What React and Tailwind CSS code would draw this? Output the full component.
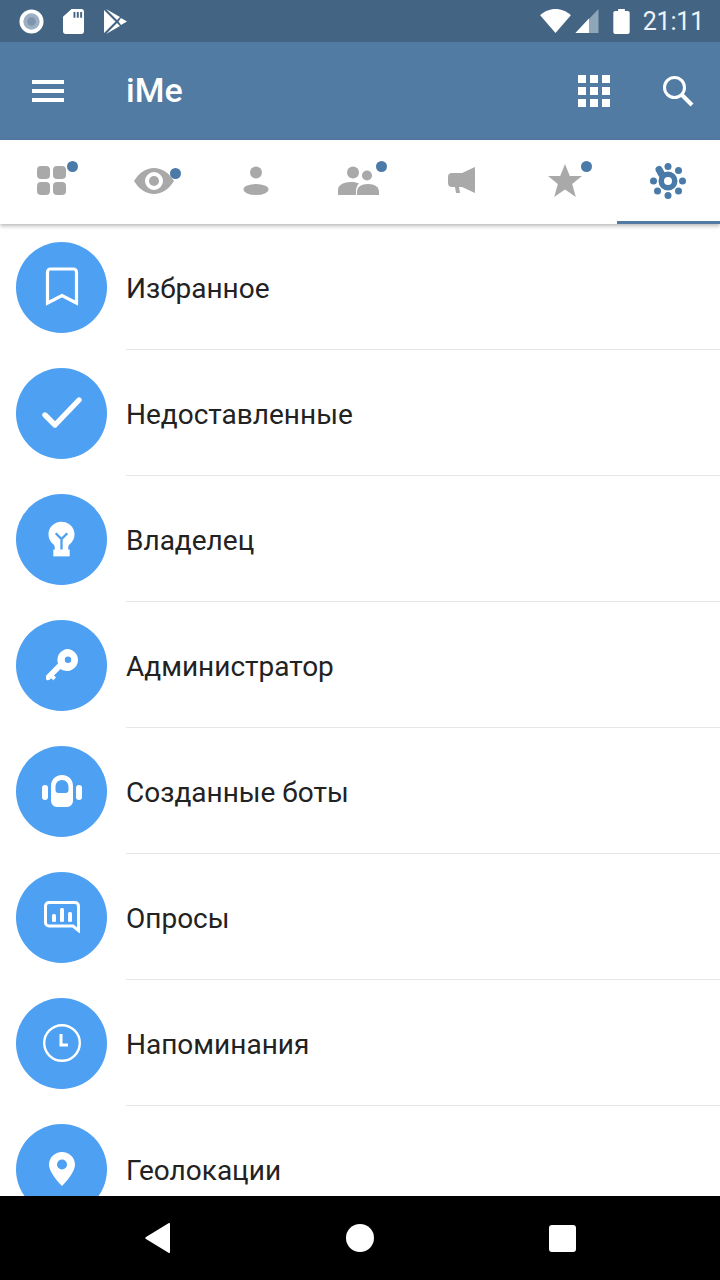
import { Fragment } from 'react'

function BookmarkIcon() {
  return (
    <svg width="34" height="40" viewBox="0 0 34 40" fill="none" stroke="white" strokeWidth="3.2">
      <path d="M2.500 36V5a3 3 0 0 1 3-3h23a3 3 0 0 1 3 3v31L17 28.500z" strokeLinejoin="miter" />
    </svg>
  )
}

function CheckIcon() {
  return (
    <svg width="42" height="34" viewBox="0 0 42 34" fill="none" stroke="white" strokeWidth="5.4" strokeLinecap="round" strokeLinejoin="round">
      <path d="M4 19l10 10L38 4" />
    </svg>
  )
}

function BulbIcon() {
  return (
    <svg width="27" height="36" viewBox="0 0 28 36">
      <path fill="white" d="M14 0C6.300 0 .5 5.800.5 13c0 4.700 2.200 8 5 10.500 1 .9 1.500 2 1.500 3.500v2.500h14V27c0-1.500.5-2.600 1.500-3.500 2.800-2.500 5-5.800 5-10.500C27.500 5.800 21.700 0 14 0z" />
      <rect x="5.500" y="29" width="17" height="7" fill="white" />
      <path d="M8 12l6 6 6-6M14 18v11" fill="none" stroke="#4EA0F3" strokeWidth="2.400" />
    </svg>
  )
}

function KeyIcon() {
  return (
    <svg width="32" height="32" viewBox="0 0 32 32">
      <path fill="white" fillRule="evenodd" d="M21 0a11 11 0 1 1-6.500 19.900L8 26.400l2 2-2.800 2.800-2-2-1.400 1.400a2.700 2.700 0 0 1-3.800-3.800L12 14.500A11 11 0 0 1 21 0zm1 7.500a3.200 3.200 0 1 0 0 6.400 3.200 3.200 0 0 0 0-6.400z" />
    </svg>
  )
}

function BotIcon() {
  return (
    <svg width="40" height="32" viewBox="0 0 40 32">
      <rect x="0" y="10" width="6" height="15" rx="3" fill="white" />
      <rect x="34" y="10" width="6" height="15" rx="3" fill="white" />
      <path fill="white" fillRule="evenodd" d="M20 0c7 0 11 5 11 11v15a6 6 0 0 1-6 6H15a6 6 0 0 1-6-6V11C9 5 13 0 20 0zm0 5c-4 0-6.500 3-6.500 7v3a3 3 0 0 0 3 3h7a3 3 0 0 0 3-3v-3c0-4-2.500-7-6.500-7z" />
    </svg>
  )
}

function PollIcon() {
  return (
    <svg width="36" height="32" viewBox="0 0 36 32" fill="none">
      <path d="M5 1.500h26a3.500 3.500 0 0 1 3.500 3.500v24.500L29 25H5a3.500 3.500 0 0 1-3.500-3.500V5A3.500 3.500 0 0 1 5 1.500z" stroke="white" strokeWidth="3" />
      <rect x="8" y="13" width="4" height="8" rx="1.500" fill="white" />
      <rect x="16" y="7" width="4" height="14" rx="1.500" fill="white" />
      <rect x="24" y="11" width="4" height="10" rx="1.500" fill="white" />
    </svg>
  )
}

function ClockIcon() {
  return (
    <svg width="40" height="40" viewBox="0 0 40 40" fill="none" stroke="white">
      <circle cx="20" cy="20" r="17.800" strokeWidth="2.400" />
      <path d="M19 11v11h7" strokeWidth="3" />
    </svg>
  )
}

function PinIcon() {
  return (
    <svg width="26" height="34" viewBox="0 0 26 34">
      <path fill="white" fillRule="evenodd" d="M13 0c7.200 0 13 5.600 13 12.800C26 20 17 30 13 34 9 30 0 20 0 12.800 0 5.600 5.800 0 13 0zm0 7.500a5 5 0 1 0 0 10 5 5 0 0 0 0-10z" />
    </svg>
  )
}

const ROWS = [
  { label: 'Избранное', icon: <BookmarkIcon /> },
  { label: 'Недоставленные', icon: <CheckIcon /> },
  { label: 'Владелец', icon: <BulbIcon /> },
  { label: 'Администратор', icon: <KeyIcon /> },
  { label: 'Созданные боты', icon: <BotIcon /> },
  { label: 'Опросы', icon: <PollIcon /> },
  { label: 'Напоминания', icon: <ClockIcon /> },
  { label: 'Геолокации', icon: <PinIcon /> },
]

function StatusBar() {
  return (
    <div className="h-[42px] shrink-0 bg-[#436583] flex items-center justify-between pl-[19px] pr-[16px]">
      <div className="flex items-center gap-[19px]">
        <svg width="25" height="25" viewBox="0 0 26 26">
          <circle cx="13" cy="13" r="12.500" fill="white" />
          <circle cx="13" cy="13" r="8.500" fill="#9db0c3" />
          <circle cx="13" cy="13" r="4.500" fill="#7d95ad" />
        </svg>
        <svg width="21" height="25" viewBox="0 0 22 26">
          <path fill="white" fillRule="evenodd" d="M9 0h10a3 3 0 0 1 3 3v20a3 3 0 0 1-3 3H3a3 3 0 0 1-3-3V8zM11 3v6h2V3zm3.500 0v6h2V3zm3.500 0v6h2V3z" />
        </svg>
        <svg width="23" height="25" viewBox="0 0 23 25" className="ml-[1px]">
          <path fill="white" d="M0 1l11.500 11.500L0 24zM2 0l14 8-3 3zM2 25l14-8-3-3zM17 9l6 3.500-6 3.500-2.500-3.500z" />
        </svg>
      </div>
      <div className="flex items-center">
        <svg width="31" height="24" viewBox="0 0 32 25" className="mr-[4px]">
          <path fill="white" d="M0 6.500C4 2.500 10 0 16 0s12 2.500 16 6.500L16 25z" />
        </svg>
        <svg width="24" height="24" viewBox="0 0 24 25" className="mr-[14px]">
          <path fill="#8fa5ba" d="M24 0v25H0z" />
          <path fill="white" d="M14 10v15H0z" />
        </svg>
        <svg width="17" height="25" viewBox="0 0 17 26" className="mr-[13px]">
          <path fill="white" d="M5 0h7v2h3a2 2 0 0 1 2 2v20a2 2 0 0 1-2 2H2a2 2 0 0 1-2-2V4a2 2 0 0 1 2-2h3z" />
        </svg>
        <span className="font-['Roboto',sans-serif] text-[25px] leading-none tracking-[-0.2px] text-[#eef2f6]">21:11</span>
      </div>
    </div>
  )
}

function Toolbar() {
  return (
    <div className="h-[98px] shrink-0 bg-[#527ba3] flex items-center text-white">
      <div className="w-[126px] pl-8 flex flex-col gap-[5px] shrink-0">
        <div className="w-8 h-1 bg-white" />
        <div className="w-8 h-1 bg-white" />
        <div className="w-8 h-1 bg-white" />
      </div>
      <div className="flex-1 font-['Roboto',sans-serif] font-medium text-[34px] leading-none pb-0.5">iMe</div>
      <svg width="32" height="32" viewBox="0 0 32 32" fill="white" className="mr-[52px]">
        <rect x="0" y="0" width="8" height="8" /><rect x="12" y="0" width="8" height="8" /><rect x="24" y="0" width="8" height="8" />
        <rect x="0" y="12" width="8" height="8" /><rect x="12" y="12" width="8" height="8" /><rect x="24" y="12" width="8" height="8" />
        <rect x="0" y="24" width="8" height="8" /><rect x="12" y="24" width="8" height="8" /><rect x="24" y="24" width="8" height="8" />
      </svg>
      <svg width="32" height="32" viewBox="0 0 32 32" fill="none" stroke="white" className="mr-[26px]">
        <circle cx="12.500" cy="12.500" r="10" strokeWidth="3" />
        <path d="M19.500 19.500L30 30" strokeWidth="4" />
      </svg>
    </div>
  )
}

const GRAY = '#a9a9a9'
const BLUE = '#4a7aa8'

const TABS = [
  {
    dot: 'left-[67px] top-[21px]',
    icon: (
      <svg width="29" height="29" viewBox="0 0 29 29" fill={GRAY}>
        <rect x="0" y="0" width="13" height="13" rx="4" /><rect x="16" y="0" width="13" height="13" rx="4" />
        <rect x="0" y="16" width="13" height="13" rx="4" /><rect x="16" y="16" width="13" height="13" rx="4" />
      </svg>
    ),
  },
  {
    dot: 'left-[67px] top-[28px]',
    icon: (
      <svg width="40" height="26" viewBox="0 0 40 26">
        <path fill={GRAY} fillRule="evenodd" d="M0 13C5 5 12 0 20 0s15 5 20 13c-5 8-12 13-20 13S5 21 0 13zm20-9a9 9 0 1 0 0 18 9 9 0 0 0 0-18z" />
        <circle cx="20" cy="13" r="5" fill={GRAY} />
      </svg>
    ),
  },
  {
    icon: (
      <svg width="26" height="30" viewBox="0 0 26 30" fill={GRAY} className="-ml-[2px]">
        <circle cx="13" cy="6.500" r="6" />
        <ellipse cx="13" cy="23.500" rx="12.500" ry="5.500" />
      </svg>
    ),
  },
  {
    dot: 'left-[67px] top-[21px]',
    icon: (
      <svg width="41" height="30" viewBox="0 0 41 30" fill={GRAY} className="-ml-[2px]">
        <circle cx="15" cy="6.500" r="6" />
        <circle cx="29" cy="9.500" r="5" />
        <path d="M0 29v-5c0-4 4-8 13-8 4 0 6 .6 8 1.500-2 2-3 4.500-3 7.500v4z" />
        <path d="M19 29v-3c0-5 4-8 11-8s11 3 11 8v3z" />
      </svg>
    ),
  },
  {
    icon: (
      <svg width="27" height="27" viewBox="0 0 27 27" fill={GRAY} className="-ml-[3px]">
        <path d="M27 0v26L14 20H4a4 4 0 0 1-4-4V10a4 4 0 0 1 4-4h10z" />
        <path d="M7 20h4l1 6H8z" />
      </svg>
    ),
  },
  {
    dot: 'left-[67px] top-[21px]',
    icon: (
      <svg width="34" height="33" viewBox="0 0 34 33" fill={GRAY} className="-ml-[2px]">
        <path d="M17 0l4.800 12H34l-9.800 8 3.600 13L17 25.500 6.200 33l3.600-13L0 12h12.200z" />
      </svg>
    ),
  },
  {
    active: true,
    icon: (
      <svg width="36" height="36" viewBox="0 0 36 36" fill={BLUE} className="-ml-[2px]">
        <circle cx="18" cy="3.500" r="3.500" /><circle cx="28.500" cy="7.500" r="3.500" /><circle cx="32.500" cy="18" r="3.500" />
        <circle cx="28.500" cy="28" r="3.500" /><circle cx="18" cy="32.500" r="3.500" /><circle cx="7.500" cy="28" r="3.500" />
        <circle cx="3.500" cy="18" r="3.500" />
        <path d="M9 6.500L11.500 11" stroke={BLUE} strokeWidth="7" strokeLinecap="round" />
        <path fillRule="evenodd" d="M18 8.500a9.500 9.500 0 1 1 0 19 9.500 9.500 0 0 1 0-19zm0 5.500a4 4 0 1 0 0 8 4 4 0 0 0 0-8z" />
      </svg>
    ),
  },
]

function TabStrip() {
  return (
    <div className="h-[84px] shrink-0 bg-white grid grid-cols-7 relative z-10 shadow-[0_2px_4px_rgba(0,0,0,0.28)]">
      {TABS.map((tab, i) => (
        <div key={i} className="relative flex items-center justify-center pb-[3px]">
          {tab.icon}
          {tab.dot && <span className={`absolute w-[11px] h-[11px] rounded-full bg-[#4a7aa8] ${tab.dot}`} />}
          {tab.active && <span className="absolute left-0 right-0 bottom-0 h-[3px] bg-[#527ba3]" />}
        </div>
      ))}
    </div>
  )
}

export default function App() {
  return (
    <div className="w-[720px] h-[1280px] flex flex-col bg-white overflow-hidden font-['Roboto',sans-serif]">
      <StatusBar />
      <Toolbar />
      <TabStrip />
      <div className="flex-1 min-h-0 overflow-hidden">
        {ROWS.map((row, i) => (
          <Fragment key={row.label}>
            <div className="h-[126px] flex items-center">
              <div className="w-[126px] shrink-0 pl-4">
                <div className="w-[91px] h-[91px] rounded-full bg-[#4ea0f3] flex items-center justify-center">
                  {row.icon}
                </div>
              </div>
              <div className={`flex-1 self-stretch flex items-center pt-[4px] text-[28px] text-[#222222] ${i < ROWS.length - 1 ? 'border-b border-[#e6e6e6]' : ''}`}>
                {row.label}
              </div>
            </div>
          </Fragment>
        ))}
      </div>
      <div className="h-[84px] shrink-0 bg-black flex items-center justify-between pl-[145px] pr-[144px]">
        <svg width="26" height="30" viewBox="0 0 26 30" fill="white">
          <path d="M25 1v28a1 1 0 0 1-1.500.8L1 16a1.200 1.200 0 0 1 0-2L23.500.2A1 1 0 0 1 25 1z" />
        </svg>
        <div className="w-7 h-7 rounded-full bg-white" />
        <div className="w-[27px] h-[27px] rounded-[3px] bg-white" />
      </div>
    </div>
  )
}
